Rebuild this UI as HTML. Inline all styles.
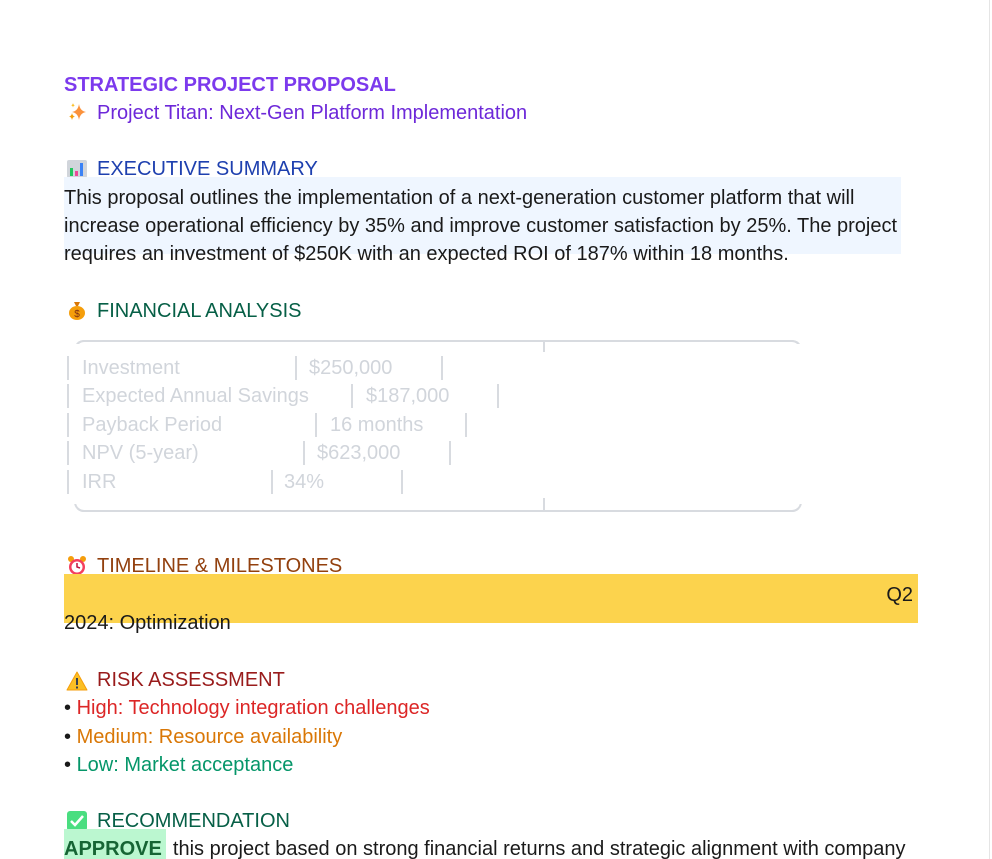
<!DOCTYPE html>
<html><head><meta charset="utf-8"><style>
html,body{margin:0;padding:0;background:#fff;width:992px;height:859px;overflow:hidden;position:relative;font-family:"Liberation Sans",Arial,sans-serif;font-size:20px;color:#1a1a1a}
.l{position:absolute;left:64px;height:28px;line-height:28px;white-space:nowrap}
.ic{position:absolute;left:66px;width:22px;height:22px}
.h{left:97px}
.cell{position:absolute;height:28px;line-height:28px;color:#d1d5db;white-space:nowrap}
.bar{position:absolute;width:2px;height:24px;background:#d8dbe0}
</style></head><body>
<div style="position:absolute;left:989px;top:0;width:1px;height:859px;background:#e5e5e5"></div>

<div class="l" style="top:71px;font-weight:bold;color:#7c3aed">STRATEGIC PROJECT PROPOSAL</div>
<svg class="ic" style="top:101px" viewBox="0 0 22 22"><path d="M13 3 Q14 10 20 11 Q14 12 13 19 Q12 12 6 11 Q12 10 13 3Z" fill="#fb923c"/><path d="M6 12 Q6.5 15 9 15.5 Q6.5 16 6 19 Q5.5 16 3 15.5 Q5.5 15 6 12Z" fill="#f59e0b"/><path d="M7 2 Q7.3 4 9 4.3 Q7.3 4.6 7 6.5 Q6.7 4.6 5 4.3 Q6.7 4 7 2Z" fill="#fbbf24"/></svg>
<div class="l h" style="top:99px;color:#6d28d9">Project Titan: Next-Gen Platform Implementation</div>

<svg class="ic" style="top:158px" viewBox="0 0 22 22"><rect x="1" y="2" width="20" height="18" rx="2" fill="#d1d5db"/><rect x="4" y="10" width="3" height="8" fill="#22c55e"/><rect x="9" y="13" width="3" height="5" fill="#ec4899"/><rect x="14" y="5" width="3" height="13" fill="#3b82f6"/></svg>
<div class="l h" style="top:155px;color:#1e40af">EXECUTIVE SUMMARY</div>
<div style="position:absolute;left:64px;top:177px;width:837px;height:77px;background:#eff6ff"></div>
<div class="l" style="top:184px">This proposal outlines the implementation of a next-generation customer platform that will</div>
<div class="l" style="top:212px">increase operational efficiency by 35% and improve customer satisfaction by 25%. The project</div>
<div class="l" style="top:240px">requires an investment of $250K with an expected ROI of 187% within 18 months.</div>

<svg class="ic" style="top:299px" viewBox="0 0 22 22"><path d="M8 3 L14 3 L12 7 L10 7Z" fill="#d97706"/><ellipse cx="11" cy="14" rx="8" ry="7" fill="#f59e0b"/><text x="11" y="18" font-size="10" text-anchor="middle" fill="#7c2d12" font-family="Liberation Sans">$</text></svg>
<div class="l h" style="top:297px;color:#065f46">FINANCIAL ANALYSIS</div>

<div style="position:absolute;left:74px;top:340px;width:724px;height:168px;border:2px solid #d8dbe0;border-radius:10px;border-left-color:transparent;border-right-color:transparent"></div>
<div style="position:absolute;left:74px;top:340px;width:10px;height:168px;border:2px solid #d8dbe0;border-right:none;border-radius:10px 0 0 10px"></div>
<div style="position:absolute;left:790px;top:340px;width:10px;height:168px;border:2px solid #d8dbe0;border-left:none;border-radius:0 10px 10px 0"></div>
<div style="position:absolute;left:74px;top:344px;width:14px;height:160px;background:#fff"></div>
<div style="position:absolute;left:790px;top:344px;width:14px;height:160px;background:#fff"></div>
<div style="position:absolute;left:543px;top:340px;width:2px;height:12px;background:#d8dbe0"></div>
<div style="position:absolute;left:543px;top:498px;width:2px;height:12px;background:#d8dbe0"></div>

<div class="bar" style="left:67px;top:356px"></div><div class="cell" style="left:82px;top:354px">Investment</div><div class="bar" style="left:295px;top:356px"></div><div class="cell" style="left:309px;top:354px">$250,000</div><div class="bar" style="left:441px;top:356px"></div>
<div class="bar" style="left:67px;top:384px"></div><div class="cell" style="left:82px;top:382px">Expected Annual Savings</div><div class="bar" style="left:351px;top:384px"></div><div class="cell" style="left:366px;top:382px">$187,000</div><div class="bar" style="left:497px;top:384px"></div>
<div class="bar" style="left:67px;top:413px"></div><div class="cell" style="left:82px;top:411px">Payback Period</div><div class="bar" style="left:315px;top:413px"></div><div class="cell" style="left:330px;top:411px">16 months</div><div class="bar" style="left:465px;top:413px"></div>
<div class="bar" style="left:67px;top:441px"></div><div class="cell" style="left:82px;top:439px">NPV (5-year)</div><div class="bar" style="left:303px;top:441px"></div><div class="cell" style="left:317px;top:439px">$623,000</div><div class="bar" style="left:449px;top:441px"></div>
<div class="bar" style="left:67px;top:470px"></div><div class="cell" style="left:82px;top:468px">IRR</div><div class="bar" style="left:271px;top:470px"></div><div class="cell" style="left:284px;top:468px">34%</div><div class="bar" style="left:401px;top:470px"></div>

<svg class="ic" style="top:555px" viewBox="0 0 22 22"><circle cx="5" cy="4" r="3" fill="#f59e0b"/><circle cx="17" cy="4" r="3" fill="#f59e0b"/><circle cx="11" cy="12" r="8" fill="#f43f5e"/><circle cx="11" cy="12" r="5.5" fill="#fff"/><path d="M11 8 L11 12 L14 13" stroke="#be123c" stroke-width="1.5" fill="none"/></svg>
<div class="l h" style="top:552px;color:#92400e">TIMELINE &amp; MILESTONES</div>
<div style="position:absolute;left:64px;top:574px;width:854px;height:49px;background:#fcd34d"></div>
<div class="l" style="left:auto;right:79px;top:581px">Q2</div>
<div class="l" style="top:609px">2024: Optimization</div>

<svg class="ic" style="top:670px" viewBox="0 0 22 22"><path d="M11 2 L21 20 L1 20Z" fill="#fbbf24" stroke="#f59e0b" stroke-linejoin="round"/><rect x="10" y="8" width="2" height="7" fill="#374151"/><rect x="10" y="16.5" width="2" height="2" fill="#374151"/></svg>
<div class="l h" style="top:666px;color:#991b1b">RISK ASSESSMENT</div>
<div class="l" style="top:694px">• <span style="color:#dc2626">High: Technology integration challenges</span></div>
<div class="l" style="top:723px">• <span style="color:#d97706">Medium: Resource availability</span></div>
<div class="l" style="top:751px">• <span style="color:#059669">Low: Market acceptance</span></div>

<svg class="ic" style="top:810px" viewBox="0 0 22 22"><rect x="1" y="1" width="20" height="20" rx="3" fill="#4ade80"/><path d="M5 11 L9 15 L17 6" stroke="#fff" stroke-width="2.5" fill="none"/></svg>
<div class="l h" style="top:807px;color:#065f46">RECOMMENDATION</div>
<div style="position:absolute;left:64px;top:829px;width:102px;height:30px;background:#bbf7d0"></div>
<div class="l" style="top:835px"><b style="color:#166534">APPROVE</b>&nbsp; this project based on strong financial returns and strategic alignment with company</div>
</body></html>
